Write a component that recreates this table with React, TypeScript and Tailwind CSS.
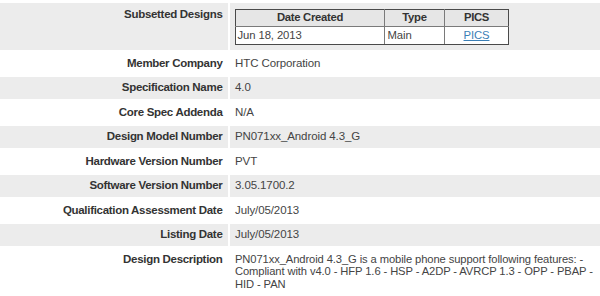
import React from "react";

const rows: [string, string][] = [
  ["Member Company", "HTC Corporation"],
  ["Specification Name", "4.0"],
  ["Core Spec Addenda", "N/A"],
  ["Design Model Number", "PN071xx_Android 4.3_G"],
  ["Hardware Version Number", "PVT"],
  ["Software Version Number", "3.05.1700.2"],
  ["Qualification Assessment Date", "July/05/2013"],
  ["Listing Date", "July/05/2013"],
];

const labelCls =
  "text-right pr-[5px] pt-[4.5px] leading-[13px] font-bold text-[11.5px] tracking-[-0.3px] text-[#333333] whitespace-nowrap";
const valueCls =
  "pl-[5px] pt-[4.5px] leading-[13px] text-[11.5px] tracking-[-0.1px] text-[#444444] whitespace-nowrap";

export default function App() {
  return (
    <div
      className="w-[600px] h-[296px] overflow-hidden bg-white flex flex-col pt-[2.7px] gap-[2.5px]"
      style={{ fontFamily: '"Liberation Sans", Arial, sans-serif' }}
    >
      <div className="grid grid-cols-[227.5px_1fr] gap-x-[2.5px] h-[47px] shrink-0">
        <div className={`${labelCls} bg-[#ececec] pt-[5.5px]`}>Subsetted Designs</div>
        <div className="bg-[#ececec] pl-[5px] pt-[6px]">
          <table className="table-fixed border-collapse border border-[#4a4a4a] w-[273px]">
            <colgroup>
              <col className="w-[149px]" />
              <col className="w-[60px]" />
              <col className="w-[64px]" />
            </colgroup>
            <thead>
              <tr className="bg-[#e6e6e6] h-[17.5px]">
                <th className="border border-[#7a7a7a] border-t-[#4a4a4a] border-l-[#4a4a4a] p-0 text-center font-bold text-[11.3px] tracking-[-0.3px] leading-[13px] text-[#333333]">
                  Date Created
                </th>
                <th className="border border-[#7a7a7a] border-t-[#4a4a4a] p-0 text-center font-bold text-[11.3px] tracking-[-0.3px] leading-[13px] text-[#333333]">
                  Type
                </th>
                <th className="border border-[#7a7a7a] border-t-[#4a4a4a] border-r-[#4a4a4a] p-0 text-center font-bold text-[11.3px] tracking-[-0.3px] leading-[13px] text-[#333333]">
                  PICS
                </th>
              </tr>
            </thead>
            <tbody>
              <tr className="bg-white h-[18px]">
                <td className="border border-[#7a7a7a] border-b-[#4a4a4a] border-l-[#4a4a4a] pl-[1.5px] py-0 text-left text-[11.3px] tracking-[-0.1px] leading-[13px] text-[#444444]">
                  Jun 18, 2013
                </td>
                <td className="border border-[#7a7a7a] border-b-[#4a4a4a] pl-[2.5px] py-0 text-left text-[11.3px] tracking-[-0.1px] leading-[13px] text-[#444444]">
                  Main
                </td>
                <td className="border border-[#7a7a7a] border-b-[#4a4a4a] border-r-[#4a4a4a] p-0 text-center text-[11.3px] tracking-[-0.1px] leading-[13px]">
                  <a href="#" className="text-[#3b7fb6] underline">
                    PICS
                  </a>
                </td>
              </tr>
            </tbody>
          </table>
        </div>
      </div>

      {rows.map(([label, value], i) => {
        const bg = i % 2 === 0 ? "bg-white" : "bg-[#ececec]";
        return (
          <div
            key={label}
            className="grid grid-cols-[227.5px_1fr] gap-x-[2.5px] h-[22px] shrink-0"
          >
            <div className={`${labelCls} ${bg}`}>{label}</div>
            <div className={`${valueCls} ${bg}`}>{value}</div>
          </div>
        );
      })}

      <div className="grid grid-cols-[227.5px_1fr] gap-x-[2.5px] flex-1">
        <div className={`${labelCls} bg-white`}>Design Description</div>
        <div className="bg-white pl-[5px] pt-[4.5px] leading-[12.7px] text-[11.2px] tracking-[-0.1px] text-[#444444] whitespace-nowrap">
          <span className="block">
            PN071xx_Android 4.3_G is a mobile phone support following features: -
          </span>
          <span className="block">
            Compliant with v4.0 - HFP 1.6 - HSP - A2DP - AVRCP 1.3 - OPP - PBAP -
          </span>
          <span className="block">HID - PAN</span>
        </div>
      </div>
    </div>
  );
}
